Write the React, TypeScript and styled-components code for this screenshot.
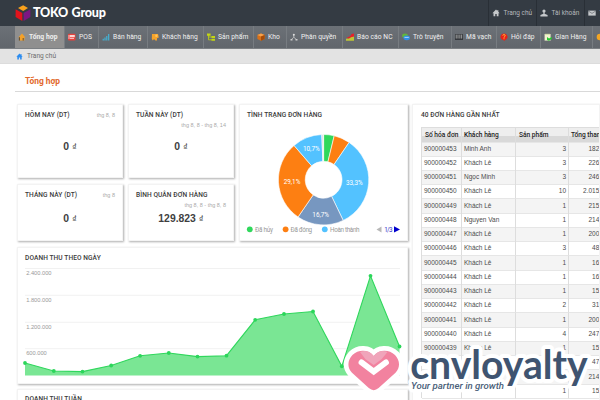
import React from 'react';
import styled, { createGlobalStyle } from 'styled-components';

const Global = createGlobalStyle`
  *{box-sizing:border-box}
  html,body{margin:0;padding:0;overflow:hidden;background:#fff}
  body{font-family:"Liberation Sans",Arial,sans-serif;font-size:6.5px;color:#444}
`;
const Page = styled.div`position:relative;width:600px;height:400px;overflow:hidden;background:#fff;display:flex;flex-direction:column;`;

const Header = styled.header`height:26px;flex:none;background:#343b43;display:flex;justify-content:space-between;`;
const Brand = styled.div`display:flex;align-items:center;padding-left:15px;gap:2px;`;
const BrandName = styled.span`font:900 12.6px/26px Lato,sans-serif;color:#fff;letter-spacing:-0.25px;word-spacing:0.8px;`;
const UserMenu = styled.nav`display:flex;width:112px;flex:none;overflow:hidden;`;
const UserItem = styled.a`display:flex;align-items:center;gap:3.5px;width:48px;flex:none;padding-left:3px;border-left:1px solid #292f36;
  font:6.5px/26px Roboto,sans-serif;color:#b4b8bc;white-space:nowrap;svg{flex:none}`;

const NavBar = styled.nav`height:23px;flex:none;background:linear-gradient(#6c7177,#61666c);display:flex;padding-left:15px;border-bottom:1px solid #7b7f83;overflow:hidden;`;
const NavItem = styled.a<{ $w: number; $active?: boolean }>`width:${p => p.$w}px;flex:none;display:flex;align-items:center;gap:3px;padding-left:3px;
  border-right:1px solid #777c81;background:${p => (p.$active ? '#8f8f8f' : 'transparent')};color:#f0f0f0;white-space:nowrap;
  font:${p => (p.$active ? 700 : 400)} 6.7px/22px Roboto,sans-serif;letter-spacing:0.06px;svg{flex:none}`;

const Crumbs = styled.div`height:15px;flex:none;background:#e3e3e3;border-bottom:1px solid #dcdcdc;padding-left:16px;display:flex;align-items:center;gap:4px;font:6.6px Roboto,sans-serif;color:#6d6d6d;`;
const Heading = styled.h1`margin:0 0 0 15px;height:28px;flex:none;padding:8px 0 0 10px;font:700 8.4px/19px Roboto,sans-serif;color:#e2692c;border-bottom:1px solid #d9d9d9;`;

const Body = styled.main`display:flex;gap:4px;padding:12px 0 0 17px;height:308px;overflow:hidden;`;
const LeftCol = styled.div`width:391px;flex:none;display:flex;flex-direction:column;gap:6px;`;
const Top = styled.div`display:grid;grid-template-columns:106px 106px 169px;grid-template-rows:74px 57px;gap:6px 5px;flex:none;height:137px;`;
const Card = styled.section`background:#fff;border:1px solid #f3f3f3;box-shadow:1px 1px 2px rgba(0,0,0,.32);min-width:0;`;
const StatCard = styled(Card)`display:flex;flex-direction:column;padding:5px 7px 0;`;
const StatHead = styled.div<{ $wrap?: boolean }>`display:flex;flex-wrap:${p => (p.$wrap ? 'wrap' : 'nowrap')};justify-content:space-between;height:19px;align-content:flex-start;`;
const CardTitle = styled.h2`margin:0;font:500 6.6px/10px Roboto,sans-serif;letter-spacing:0.08px;color:#3a3a3a;white-space:nowrap;`;
const Period = styled.span<{ $full?: boolean }>`font-size:5.5px;line-height:10px;color:#aaa;white-space:nowrap;text-align:right;width:${p => (p.$full ? '100%' : 'auto')};`;
const Value = styled.div<{ $gap: number }>`padding-top:${p => p.$gap}px;text-align:center;font:700 10.4px/12px "Liberation Sans",Arial,sans-serif;color:#3f3f3f;
  small{font-size:9.5px;font-weight:400}`;
const DonutCard = styled(Card)`grid-column:3;grid-row:1 / 3;padding:5px 7px 0;`;
const LineCard = styled(Card)`height:137px;flex:none;padding:5px 7px 0;`;
const WeekCard = styled(Card)`height:40px;flex:none;padding:4px 7px 0;margin-top:-1px;`;
const Plot = styled.svg`display:block;overflow:visible;`;

const OrdersCard = styled(Card)`flex:1;height:320px;padding:5px 0 0 8px;overflow:hidden;`;
const Table = styled.div`margin-top:6.5px;width:200px;border-left:1px solid #ddd;border-top:1px solid #ddd;`;
const Row = styled.div<{ $odd?: boolean }>`display:grid;grid-template-columns:40px 54px 53px 53px;height:14.26px;background:${p => (p.$odd ? '#f4f4f4' : '#fff')};`;
const HeadRow = styled(Row)`height:14px;background:linear-gradient(#eee 0 55%,#d9d9d9 60%);font:500 6.6px/14px Roboto,sans-serif;color:#222;`;
const Cell = styled.span<{ $right?: boolean; $pad?: number }>`border-right:1px solid #ddd;border-bottom:1px solid #e6e6e6;padding:0 2px 0 ${p => p.$pad ?? 2}px;
  text-align:${p => (p.$right ? 'right' : 'left')};line-height:14px;white-space:nowrap;`;
const Money = styled(Cell)`padding-right:10px;text-align:right;border-right:0;`;
const DataRow = styled(Row)`font-size:6.5px;color:#4b4b4b;`;

const Watermark = styled.svg`position:absolute;left:340px;top:330px;`;

const Home = ({ c, s = 8 }: { c: string; s?: number }) => (
  <svg width={s} height={s} viewBox="0 0 8 8"><path d="M4 .6.4 4.2h1.1v3.1h1.8V5h1.4v2.3h1.8V4.2h1.1L6.3 2.8V1H5.4v.9z" fill={c} /></svg>
);
const Person = ({ c = '#c5c8cb' }) => (
  <svg width="8" height="8" viewBox="0 0 8 8" fill={c}><circle cx="4" cy="2" r="1.6" /><path d="M3.4 3h1.2v1.8L7.6 6v1.5H.4V6l3-1.2z" /></svg>
);
const I = ({ children }: { children: React.ReactNode }) => <svg width="8" height="8" viewBox="0 0 8 8">{children}</svg>;

const nav: { t: string; w: number; icon: React.ReactNode }[] = [
  { t: 'Tổng hợp', w: 50, icon: <I><path d="M4 .6.4 4.4h1v3.2h5V4.4h1L5.9 2.8z" fill="#f5a128" /><path d="M1.4 4.2v3.4M5.2 5v2.6" stroke="#4b3a22" strokeWidth=".8" /></I> },
  { t: 'POS', w: 34, icon: <I><rect y=".8" width="7.5" height="6.6" rx="1" fill="#e8413c" /><rect x="1.8" y="2" width="5" height="2.2" fill="#fbd5d2" /><path d="M2 5.4h4M1 2v4" stroke="#fff" strokeWidth=".7" /></I> },
  { t: 'Bán hàng', w: 49, icon: <I><path d="M1.2 7.6V5.8M3 7.6V4.4M4.8 7.6V3M6.7 7.6V1" stroke="#41b8dc" strokeWidth="1.1" /></I> },
  { t: 'Khách hàng', w: 56, icon: <I><path d="M1 1h6l.8 3.6L6 5.2v2.2H4.4L3 6 1.8 7.6.8 6z" fill="#f4a32c" /><circle cx="5.4" cy="2.8" r="1.2" fill="#ffc45a" /></I> },
  { t: 'Sản phẩm', w: 50, icon: <I><path d="M0 .6h3.6v2.1H0zM4.4 2.9H8V5H4.4zM4.4 5.8H8v2H4.4z" fill="#c3d613" /><path d="M1.5 2v4.8h3M1.5 4h3" stroke="#c3d613" fill="none" strokeWidth=".8" /></I> },
  { t: 'Kho', w: 33, icon: <I><path d="M4 .5 7.6 2v4L4 7.7.4 6V2z" fill="#d87018" /><path d="M4 .5 7.6 2 4 3.6.4 2z" fill="#f7a14a" /><path d="M4 3.6 7.6 2v4L4 7.7z" fill="#a64c08" /></I> },
  { t: 'Phân quyền', w: 56, icon: <I><path d="M3.8 1v3.2L1.3 6.6M3.8 4.2l2.6 2.4" stroke="#c9c9c9" fill="none" strokeWidth=".8" /><circle cx="3.8" cy="1.7" r="1" fill="#ddd" /><path d="M.5 6h2v1.6h-2zM5.5 6h2v1.6h-2z" fill="#ccc" /></I> },
  { t: 'Báo cáo NC', w: 56, icon: <I><path d="M0 7.8V5.8l3-.6 2-1.5 3-.6v4.7z" fill="#bdc536" /><path d="M.3 5 3 3.8l1.6-1L5.5 1 8 .5v3L5 4.3 3 5.6z" fill="#e8202a" /></I> },
  { t: 'Trò truyện', w: 53, icon: <I><ellipse cx="3" cy="2.8" rx="2.9" ry="2.2" fill="#62b63b" /><ellipse cx="4.7" cy="4.8" rx="3.3" ry="2.4" fill="#2f8fe8" /><path d="M2.5 4.4h4.3" stroke="#cfe7ff" strokeWidth=".8" /></I> },
  { t: 'Mã vạch', w: 45, icon: <I><path d="M0 1.2h8v5.6H0z" fill="#2a2d30" /><path d="M1.2 1.6v4M3 1.6v4M4.9 1.6v4M6.7 1.6v4" stroke="#ddd" strokeWidth=".7" /></I> },
  { t: 'Hỏi đáp', w: 44, icon: <I><path d="M4 .5a3.5 3.3 0 0 1 2.3 5.8L4.5 7.8 2 6.5A3.5 3.3 0 0 1 4 .5" fill="#e8201a" /><path d="M2.8 2.6c.2-1.6 2.6-1.3 2.3.2C5 3.7 4 3.5 4 4.7m0 .6v.9" stroke="#ffd83a" fill="none" strokeWidth=".9" /></I> },
  { t: 'Gian Hàng', w: 52, icon: <I><path d="M.6 1h6v6.6h-6z" fill="#f3f3cf" /><path d="m3 4 2 1.5L7.8 4v1.8L5 7.8 3 7z" fill="#25c930" /><path d="M1 1.2h5" stroke="#b8c58b" strokeWidth=".7" /></I> },
  { t: '', w: 30, icon: <I><circle cx="4" cy="4" r="3.3" fill="#f4a623" /></I> },
];

const rows: [string, string, string, string][] = [
  ['900000453', 'Minh Anh', '3', '182.000'], ['900000452', 'Khách Lẻ', '3', '226.000'], ['900000451', 'Ngọc Minh', '3', '246.000'],
  ['900000450', 'Khách Lẻ', '10', '2.015.000'], ['900000449', 'Khách Lẻ', '1', '215.000'], ['900000448', 'Nguyen Van', '1', '214.000'],
  ['900000447', 'Khách Lẻ', '1', '200.000'], ['900000446', 'Khách Lẻ', '3', '48.000'], ['900000445', 'Khách Lẻ', '1', '16.000'],
  ['900000444', 'Khách Lẻ', '1', '16.000'], ['900000443', 'Khách Lẻ', '1', '15.000'], ['900000442', 'Khách Lẻ', '2', '31.000'],
  ['900000441', 'Khách Lẻ', '1', '200.000'], ['900000440', 'Khách Lẻ', '4', '247.000'], ['900000439', 'Khách Lẻ', '1', '15.000'],
  ['', '', '', '47.000'], ['', '', '', '214.000'], ['', '', '1', '15.000'],
];

const pt = (r: number, deg: number) => {
  const a = (deg * Math.PI) / 180;
  return `${(r * Math.sin(a)).toFixed(2)} ${(-r * Math.cos(a)).toFixed(2)}`;
};
const arc = (a: number, b: number) => `M${pt(45.2, a)}A45.2 45.2 0 0 1 ${pt(45.2, b)}L${pt(18.4, b)}A18.4 18.4 0 0 0 ${pt(18.4, a)}Z`;
const slices: [number, number, string][] = [
  [0, 13.6, '#30d85c'], [13.6, 34.4, '#fd7f12'], [34.4, 154.3, '#53c2ff'], [154.3, 214.4, '#7797c0'],
  [214.4, 319.2, '#fd7f12'], [319.2, 357.7, '#53c2ff'], [357.7, 360, '#dddddd'],
];
const pts = [[0, 108], [28.8, 116], [57.5, 116.6], [86.2, 110.5], [115.1, 100.8], [143.8, 98], [172.5, 101.6], [201.5, 100.7], [230.2, 64.8], [259, 59], [288, 56.5], [316.8, 111.3], [345.5, 20.8], [374.5, 91.5]];
const line = pts.map(p => p.join(',')).join(' ');

const Donut = () => (
  <Plot width="153" height="115" viewBox="247 120 153 115" fontFamily="Roboto, sans-serif">
    <g transform="translate(323.6 179.7)" stroke="#fff" strokeWidth=".6">
      {slices.map(([a, b, c]) => <path key={a} d={arc(a, b)} fill={c} />)}
    </g>
    <g fill="#fff" fontSize="6.4" textAnchor="middle">
      <text x="311.3" y="151">10,7%</text><text x="292" y="183.5">29,1%</text><text x="354.3" y="184.5">33,3%</text><text x="320.7" y="217">16,7%</text>
    </g>
    <circle cx="249.8" cy="229.3" r="2.9" fill="#30d85c" /><circle cx="285.6" cy="229.3" r="2.9" fill="#fd7f12" /><circle cx="324.8" cy="229.3" r="2.9" fill="#53c2ff" />
    <g fill="#999" fontSize="6.3">
      <text x="255" y="231.6" textLength="18">Đã hủy</text><text x="290.6" y="231.6" textLength="21.5">Đã đóng</text><text x="330" y="231.6" textLength="29.5">Hoàn thành</text>
      <path d="M376.5 229.4l5-3v6z" fill="#b8b8b8" /><path d="M400 229.4l-6-3.2v6.4z" fill="#0000cd" />
      <text x="384.2" y="231.6" fill="#3333c8" textLength="8.3">1/3</text>
    </g>
  </Plot>
);

const LineChart = () => (
  <Plot width="376" height="116" viewBox="0 8 376 116">
    {[[13.5, '2.400.000'], [40.3, '1.800.000'], [67.3, '1.200.000'], [93.7, '600.000']].map(([y, t]) => (
      <g key={t}>
        <path d={`M0 ${y}H375`} stroke="#eee" strokeWidth=".8" />
        <text x="1.2" y={Number(y) + 6.4} fontSize="5.7" fill="#999">{t}</text>
      </g>
    ))}
    <polygon points={`0,120.5 ${line} 374.5,120.5`} fill="#7ae694" />
    <polyline points={line} fill="none" stroke="#2fd75c" strokeWidth="1.1" />
    {pts.map(([x, y]) => <circle key={x} cx={x} cy={y} r="1.9" fill="#2bd65a" />)}
  </Plot>
);

const heart = 'M33.7 26C38.5 19.2 49 19 55 25C60.3 31 60.3 37.5 55.5 42.8L38.6 58Q33.7 62.3 28.8 58L12 42.8C7.2 37.5 7.2 31 12.4 25C18.4 19 28.9 19.2 33.7 26Z';

const Logo = () => (
  <Watermark width="260" height="70" viewBox="0 0 260 70">
    <g stroke="#fff" fill="#fff" strokeLinejoin="round">
      <path d={heart} strokeWidth="9.5" />
      <text x="70.2" y="49.3" fontFamily="Lato, sans-serif" fontWeight="700" fontSize="40" textLength="177.5" lengthAdjust="spacingAndGlyphs" strokeWidth="8">cnvloyalty</text>
      <text x="71" y="59" fontFamily="Roboto, sans-serif" fontStyle="italic" fontWeight="500" fontSize="9.6" textLength="93" lengthAdjust="spacingAndGlyphs" strokeWidth="7">Your partner in growth</text>
    </g>
    <path d={heart} fill="#f2829f" />
    <path d="M20 22C25 19.5 30.5 21.4 33.7 26C37 21.4 42.5 19.5 47.5 22L41.5 29.2L33.7 35L25.5 29.2Z" fill="#f0a4ba" />
    <path d="M21.5 32.4L33.7 41.6L46 32.4" stroke="#fff" strokeWidth="5.8" strokeLinecap="round" fill="none" />
    <text x="70.2" y="49.3" fontFamily="Lato, sans-serif" fontWeight="700" fontSize="40" textLength="177.5" lengthAdjust="spacingAndGlyphs" fill="#3f5470">cnvloyalty</text>
    <text x="71" y="59" fontFamily="Roboto, sans-serif" fontStyle="italic" fontWeight="500" fontSize="9.6" textLength="93" lengthAdjust="spacingAndGlyphs" fill="#4a6079">Your partner in growth</text>
  </Watermark>
);

const Dong = () => <small>₫</small>;

export default function App() {
  return (
    <Page>
      <Global />
      <Header>
        <Brand>
          <svg width="16" height="17" viewBox="0 0 16 17">
            <path d="M8.2 .3 13 3 8.2 6 3 3z" fill="#f8a11c" /><path d="M.6 4.3 7.3 8v8L.6 12z" fill="#e2131c" /><path d="M15.4 4.3 8.6 8v8l6.8-4z" fill="#7c1682" />
          </svg>
          <BrandName>TOKO Group</BrandName>
        </Brand>
        <UserMenu>
          <UserItem><Home c="#c5c8cb" />Trang chủ</UserItem>
          <UserItem><Person />Tài khoản</UserItem>
          <UserItem><I><path d="M.3 1.6h7.4v5H.3z" fill="#c5c8cb" /><path d="m.3 2 3.7 2.4L7.7 2" stroke="#555b62" strokeWidth=".6" fill="none" /></I>Tin nhắn</UserItem>
        </UserMenu>
      </Header>
      <NavBar>{nav.map((n, i) => <NavItem key={i} $w={n.w} $active={i === 0}>{n.icon}{n.t}</NavItem>)}</NavBar>
      <Crumbs><Home c="#2b8cf0" s={7} />Trang chủ</Crumbs>
      <Heading>Tổng hợp</Heading>
      <Body>
        <LeftCol>
          <Top>
            <StatCard><StatHead><CardTitle>HÔM NAY (DT)</CardTitle><Period>thg 8, 8</Period></StatHead><Value $gap={12}>0 <Dong /></Value></StatCard>
            <StatCard><StatHead $wrap><CardTitle>TUẦN NÀY (DT)</CardTitle><Period $full>thg 8, 8 - thg 8, 14</Period></StatHead><Value $gap={12}>0 <Dong /></Value></StatCard>
            <DonutCard><CardTitle>TÌNH TRẠNG ĐƠN HÀNG</CardTitle><Donut /></DonutCard>
            <StatCard><StatHead><CardTitle>THÁNG NÀY (DT)</CardTitle><Period>thg 8</Period></StatHead><Value $gap={4}>0 <Dong /></Value></StatCard>
            <StatCard><StatHead $wrap><CardTitle>BÌNH QUÂN ĐƠN HÀNG</CardTitle><Period $full>thg 8, 8 - thg 8, 8</Period></StatHead><Value $gap={4}>129.823 <Dong /></Value></StatCard>
          </Top>
          <LineCard><CardTitle>DOANH THU THEO NGÀY</CardTitle><LineChart /></LineCard>
          <WeekCard><CardTitle>DOANH THU TUẦN</CardTitle></WeekCard>
        </LeftCol>
        <OrdersCard>
          <CardTitle>40 ĐƠN HÀNG GẦN NHẤT</CardTitle>
          <Table>
            <HeadRow><Cell $pad={3}>Số hóa đơn</Cell><Cell>Khách hàng</Cell><Cell $pad={3}>Sản phẩm</Cell><Cell>Tổng thanh toán</Cell></HeadRow>
            {rows.map((r, i) => (
              <DataRow key={i} $odd={i % 2 === 0}><Cell>{r[0]}</Cell><Cell>{r[1]}</Cell><Cell $right>{r[2]}</Cell><Money>{r[3]}</Money></DataRow>
            ))}
          </Table>
        </OrdersCard>
      </Body>
      <Logo />
    </Page>
  );
}
